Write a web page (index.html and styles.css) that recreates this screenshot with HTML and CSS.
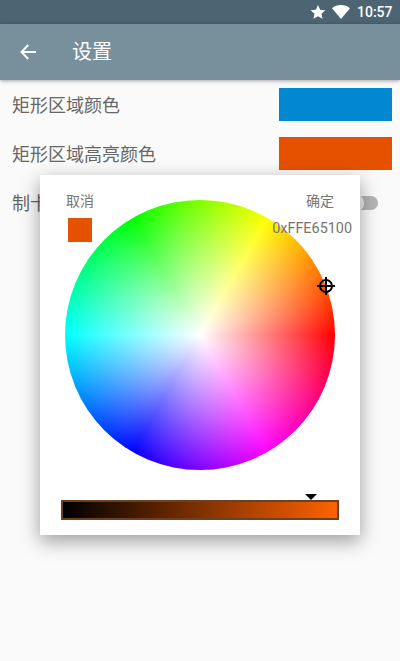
FILE: index.html
```html
<!DOCTYPE html>
<html lang="zh">
<head>
<meta charset="utf-8">
<title>设置</title>
<link rel="stylesheet" href="styles.css">
</head>
<body>
<div class="screen">
  <div class="status-bar">
    <svg class="icon-star" viewBox="0 0 24 24"><path d="M12 1.500l3.200 7.100 7.800.8-5.800 5.200 1.600 7.700L12 18.400l-6.800 3.900 1.600-7.700L1 9.400l7.800-.8z"/></svg>
    <svg class="icon-wifi" viewBox="0 0 18 14"><path d="M9 14L0 3.200C2.400 1.200 5.500 0 9 0s6.600 1.200 9 3.200z"/></svg>
    <span class="clock">10:57</span>
  </div>
  <header class="app-bar">
    <svg class="icon-back" viewBox="0 0 16 16"><path d="M16 8H1.500M8.200 1L1.500 8l6.700 7"/></svg>
    <h1 class="title">设置</h1>
  </header>
  <main class="list">
    <div class="row"><span class="label">矩形区域颜色</span><span class="swatch swatch-blue"></span></div>
    <div class="row"><span class="label">矩形区域高亮颜色</span><span class="swatch swatch-orange"></span></div>
    <div class="row"><span class="label">制卡</span><span class="switch"><span class="thumb"></span></span></div>
  </main>
  <section class="dialog">
    <div class="wheel">
      <svg class="crosshair" viewBox="0 0 18 18"><circle cx="9" cy="9" r="6"/><path d="M9 0v18M0 9h18"/></svg>
    </div>
    <div class="slider"><span class="marker"></span></div>
    <div class="overlay">
      <div class="overlay-left">
        <span class="action">取消</span>
        <span class="current"></span>
      </div>
      <div class="overlay-right">
        <span class="action action-ok">确定</span>
        <span class="hex">0xFFE65100</span>
      </div>
    </div>
  </section>
</div>
</body>
</html>
```

FILE: styles.css
```css
* { box-sizing: border-box; }
html, body { margin: 0; padding: 0; height: 100%; }
body { font-family: Roboto, "Noto Sans CJK SC", sans-serif; background: #fafafa; overflow: hidden; }
.screen { position: relative; width: 400px; height: 661px; background: #fafafa; }

.status-bar { height: 24px; background: #4d6572; display: flex; align-items: center; justify-content: flex-end; padding-right: 8px; color: #fff; }
.icon-star { width: 16px; height: 16px; fill: #fff; margin-right: 6px; }
.icon-wifi { width: 18px; height: 14px; fill: #fff; margin-right: 7px; }
.clock { font-size: 14px; font-weight: 500; line-height: 24px; width: 35px; }

.app-bar { height: 56px; background: #78909c; display: flex; align-items: center; padding-left: 20px; box-shadow: 0 1px 4px rgba(0,0,0,.35); position: relative; }
.icon-back { width: 16px; height: 16px; fill: none; stroke: #fff; stroke-width: 1.9; margin-right: 36px; }
.title { margin: 0; padding-bottom: 3px; font-size: 20px; font-weight: 400; color: #fff; }

.list { padding: 8px 8px 0 12px; display: flex; flex-direction: column; gap: 16px; }
.row { height: 33px; display: flex; align-items: center; justify-content: space-between; }
.label { font-size: 18px; color: #666; padding-bottom: 2px; }
.swatch { width: 113px; height: 33px; }
.swatch-blue { background: #0288d1; }
.swatch-orange { background: #e65100; }
.switch { width: 34px; height: 14px; border-radius: 7px; background: #b5b5b5; margin-right: 14px; position: relative; }
.thumb { display: block; width: 20px; height: 20px; border-radius: 50%; background: #f1f1f1; margin: -3px 0 0 0; }

.dialog { position: absolute; left: 40px; top: 175px; width: 320px; height: 360px; background: #fff; box-shadow: 0 6px 18px rgba(0,0,0,.38); padding: 25px 21px 15px; display: flex; flex-direction: column; align-items: center; }
.wheel { position: relative; flex: none; width: 270px; height: 270px; border-radius: 50%; background: radial-gradient(circle closest-side, #fff 0%, rgba(255,255,255,0) 100%), conic-gradient(from 90deg, #f00, #f0f, #00f, #0ff, #0f0, #ff0, #f00); }
.crosshair { position: absolute; left: 252px; top: 77px; width: 18px; height: 18px; fill: none; stroke: #000; stroke-width: 2; }

.slider { position: relative; flex: none; margin-top: 30px; width: 278px; height: 20px; border: 2px solid #6e4020; background: linear-gradient(to right, #000, #ff6200); }
.marker { position: absolute; left: 242px; top: -8px; width: 0; height: 0; border-left: 6px solid transparent; border-right: 6px solid transparent; border-top: 6px solid #000; }

.overlay { position: absolute; left: 0; top: 0; right: 0; display: flex; justify-content: space-between; padding: 17px 8px 0 26px; font-size: 14px; color: #757575; }
.overlay-left { display: flex; flex-direction: column; align-items: center; }
.overlay-right { display: flex; flex-direction: column; align-items: flex-end; }
.action { line-height: 18px; }
.action-ok { margin-right: 18px; }
.current { width: 24px; height: 24px; background: #e65100; margin-top: 8px; }
.hex { margin-top: 10px; line-height: 18px; font-size: 14.4px; }
```
